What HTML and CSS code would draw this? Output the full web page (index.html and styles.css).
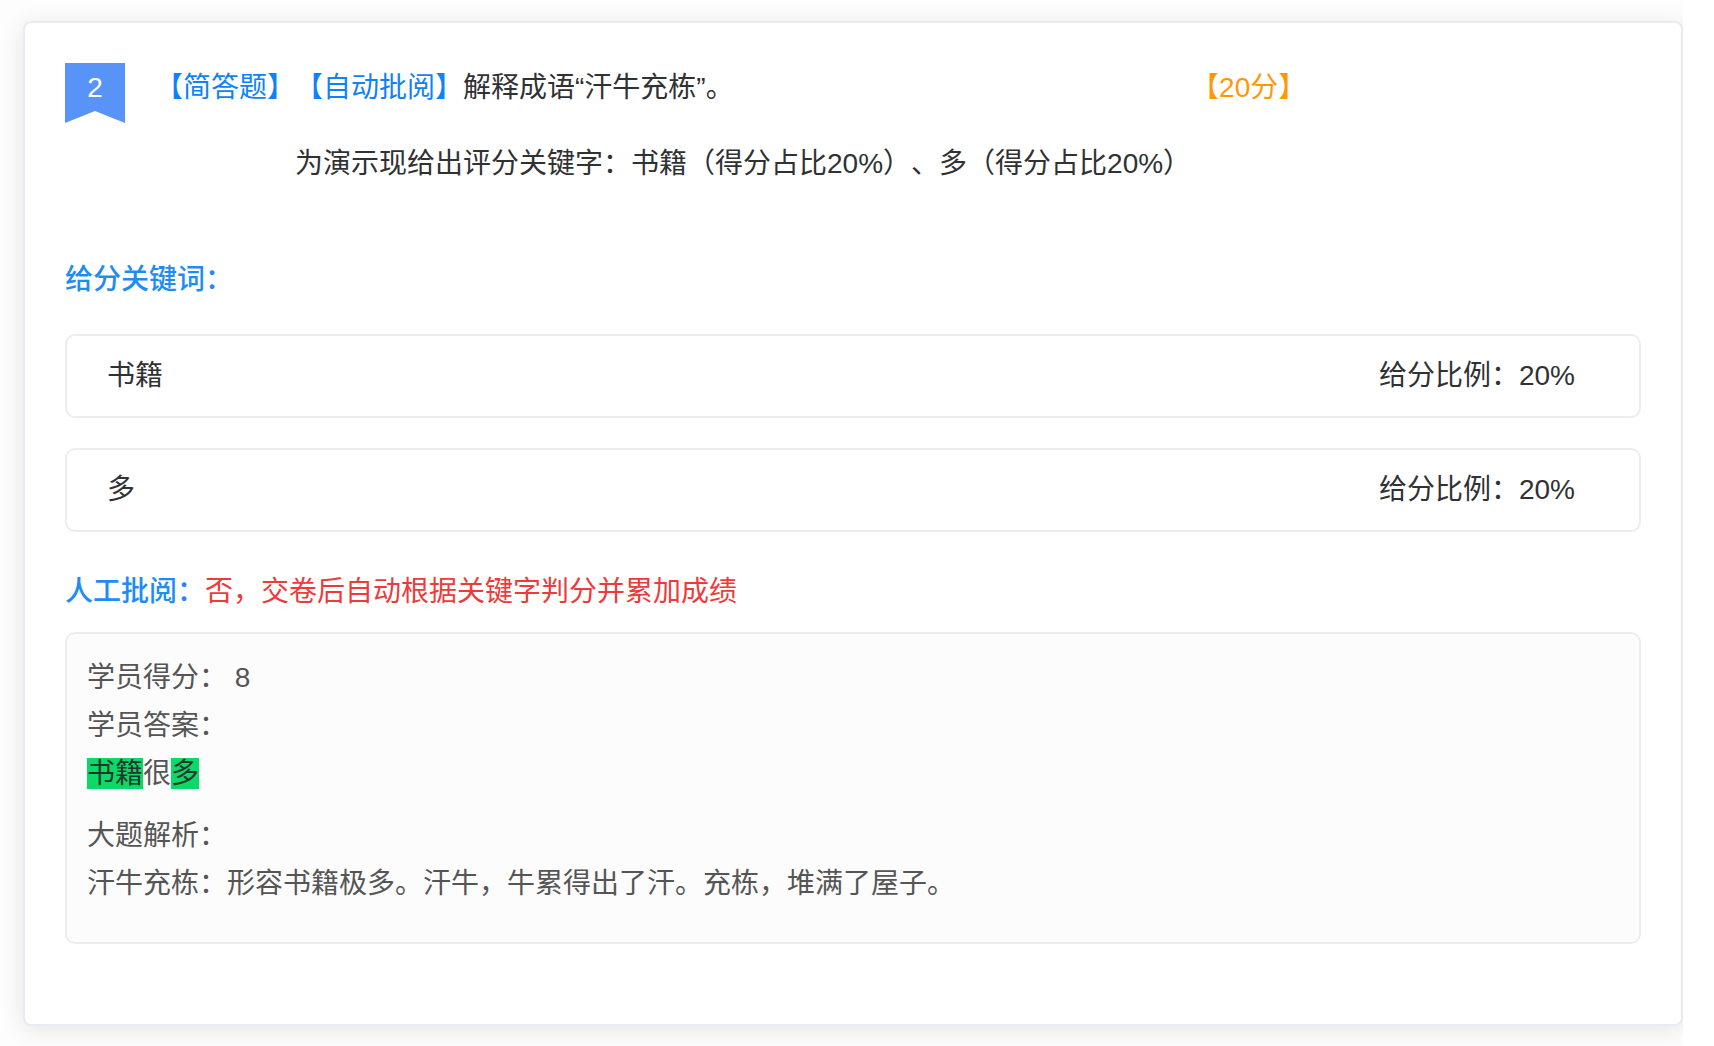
FILE: index.html
```html
<!DOCTYPE html>
<html lang="zh-CN">
<head>
    <meta charset="UTF-8">
    <meta name="viewport" content="width=device-width, initial-scale=1.0">
    <title>答题详情</title>
    <link rel="stylesheet" href="styles.css">
</head>
<body>
    <main class="container">
        <section class="card">
            <div class="question">
                <div class="question-no">
                    <svg class="ribbon" viewBox="0 0 60 60" aria-hidden="true">
                        <path d="M0 0H60V60L30 48L0 60Z" fill="#5893f7"/>
                    </svg>
                    <span>2</span>
                </div>
                <span class="tag">【简答题】</span>
                <div class="question-title">
                    <p><span class="tag">【自动批阅】</span>解释成语“汗牛充栋”。</p>
                    <p>为演示现给出评分关键字：书籍（得分占比20%）、多（得分占比20%）</p>
                </div>
                <span class="score">【20分】</span>
            </div>

            <h2 class="section-title">给分关键词：</h2>
            <ul class="keyword-list">
                <li class="keyword"><span>书籍</span><span>给分比例：20%</span></li>
                <li class="keyword"><span>多</span><span>给分比例：20%</span></li>
            </ul>

            <p class="review"><strong class="label">人工批阅：</strong><span class="warn">否，交卷后自动根据关键字判分并累加成绩</span></p>

            <div class="answer">
                <p>学员得分： 8</p>
                <p>学员答案：</p>
                <p><mark>书籍</mark>很<mark>多</mark></p>
                <div class="analysis">
                    <p>大题解析：</p>
                    <p>汗牛充栋：形容书籍极多。汗牛，牛累得出了汗。充栋，堆满了屋子。</p>
                </div>
            </div>
        </section>
    </main>
</body>
</html>
```
FILE: styles.css
```css
* { box-sizing: border-box; margin: 0; padding: 0; }
body {
    font-family: "Liberation Sans", "Noto Sans CJK SC", sans-serif;
    font-size: 28px;
    line-height: 48px;
    color: #303133;
    background: #fff;
    text-spacing-trim: space-all;
}
.container {
    margin-right: 31px;
    padding: 21px 0 21px 23px;
    background: #fdfdfd;
    overflow: hidden;
}
.card {
    padding: 40px;
    background: #fff;
    border: 2px solid #e8ebf2;
    border-radius: 8px;
    box-shadow: 0 4px 24px rgba(0, 0, 0, 0.1);
}
.question {
    display: flex;
    align-items: flex-start;
    margin-bottom: 67px;
    line-height: 50px;
}
.question-no {
    position: relative;
    width: 60px;
    height: 60px;
    margin-right: 30px;
    text-align: center;
    color: #fff;
}
.question-no span {
    position: relative;
}
.ribbon {
    position: absolute;
    top: 0;
    left: 0;
    width: 100%;
    height: 100%;
}
.question-title p + p {
    margin-top: 26px;
}
.tag {
    color: #1082f9;
}
.score {
    color: #ff9709;
}
.section-title {
    margin-bottom: 30px;
    font-size: 28px;
    font-weight: 500;
    color: #1e8cf5;
}
.keyword-list {
    list-style: none;
}
.keyword {
    display: flex;
    justify-content: space-between;
    margin-bottom: 30px;
    padding: 16px 64px 16px 40px;
    border: 2px solid #ededed;
    border-radius: 10px;
}
.review {
    margin: 36px 0 16px;
}
.label {
    font-weight: 500;
    color: #1e8cf5;
}
.warn {
    color: #ee3a3a;
}
.answer {
    margin-bottom: 40px;
    padding: 20px 20px 34px;
    color: #555;
    background: #fcfcfc;
    border: 2px solid #ededed;
    border-radius: 10px;
}
.answer mark {
    color: #24362c;
    background: #0bd968;
}
.analysis {
    margin-top: 14px;
}
```
